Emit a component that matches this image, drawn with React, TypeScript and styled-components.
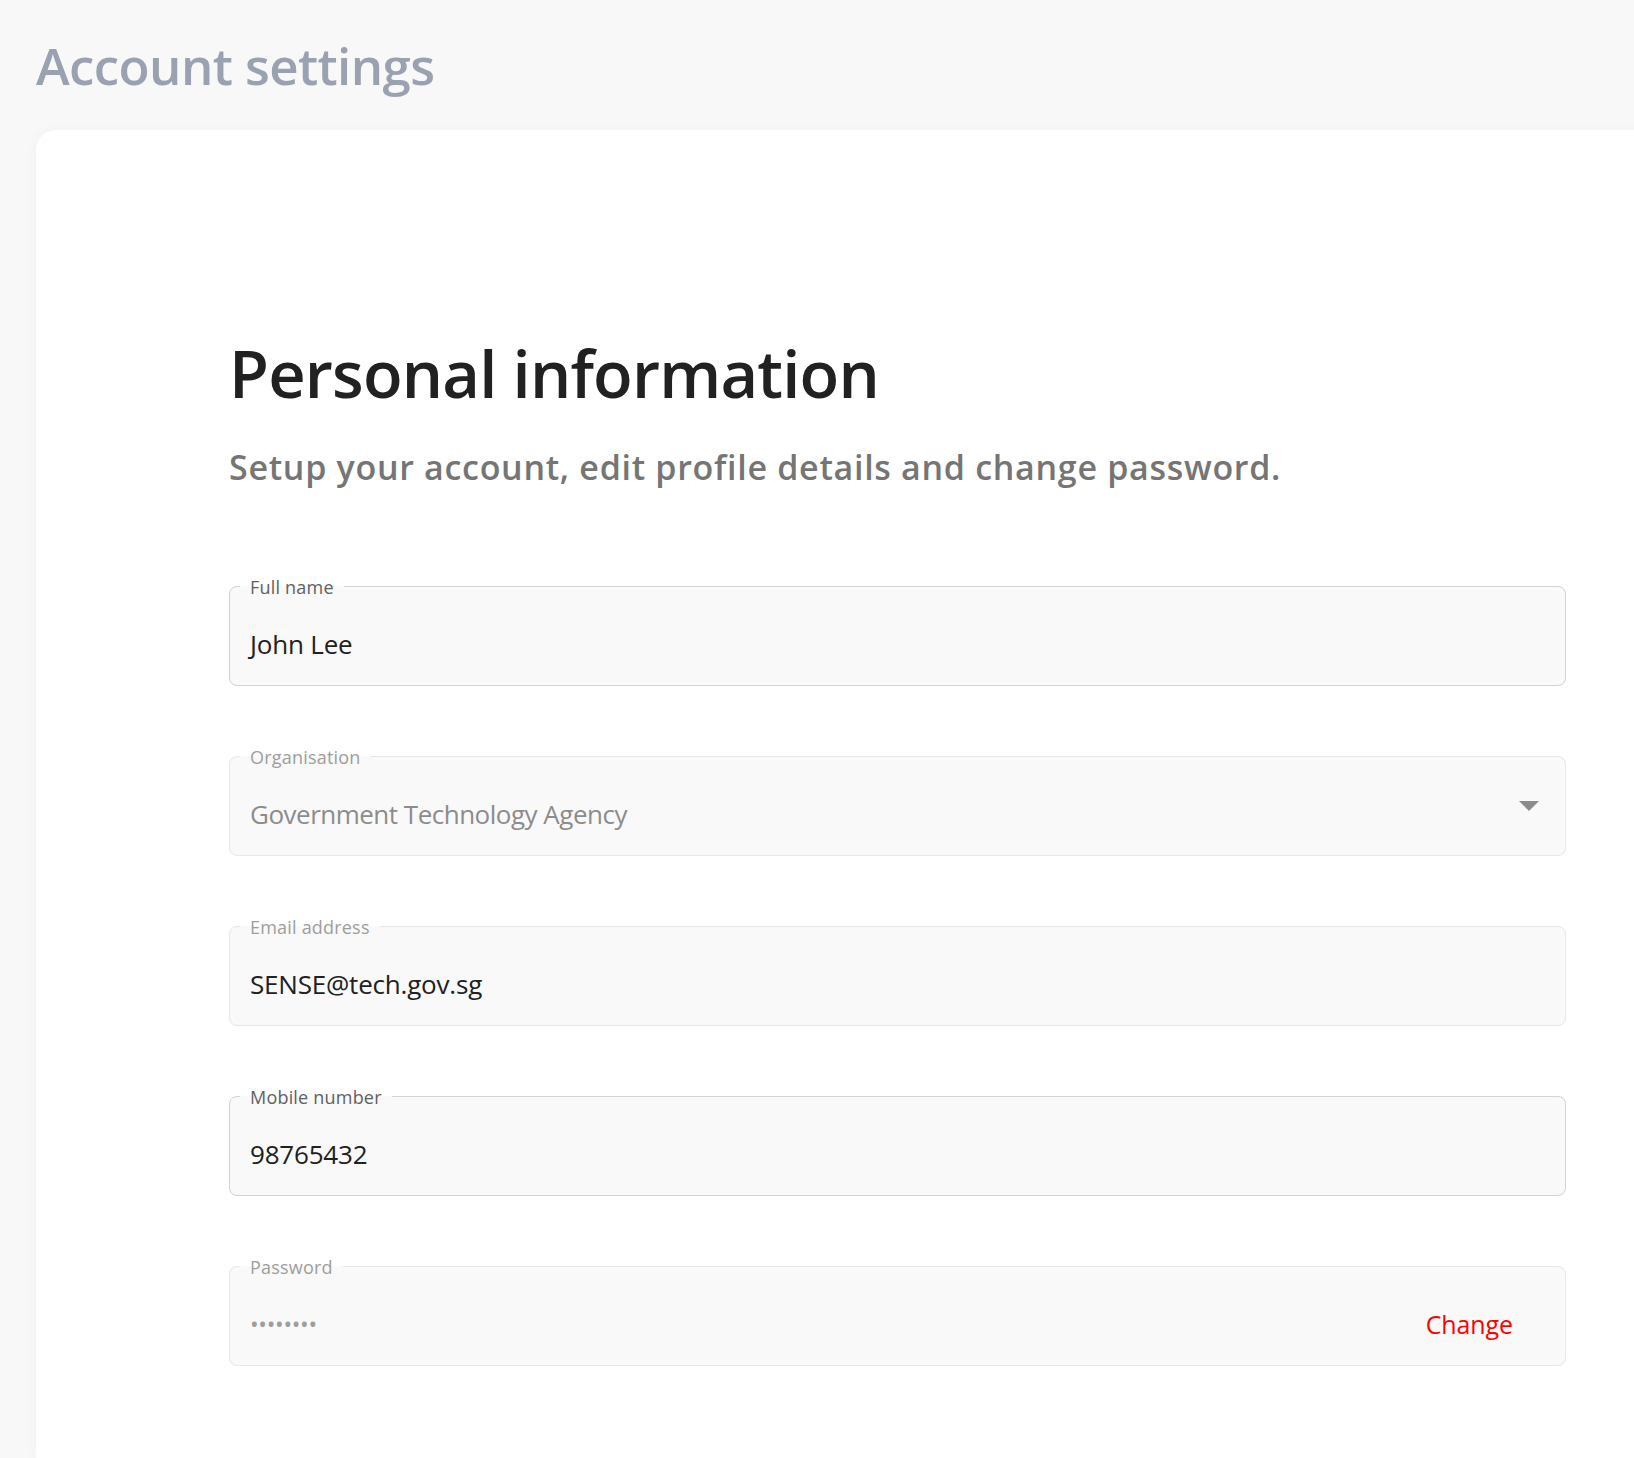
import React from "react";
import styled, { createGlobalStyle } from "styled-components";

const GlobalStyle = createGlobalStyle`
  html, body {
    margin: 0;
    padding: 0;
    background: #f8f8f8;
    font-family: "Open Sans", "Noto Sans", sans-serif;
  }
  * { box-sizing: border-box; }
`;

const Page = styled.div`
  overflow: hidden;
  padding: 0 0 0 36px;
  background: #f8f8f8;
`;

const PageTitle = styled.h1`
  margin: 0;
  padding-top: 33px;
  height: 130px;
  font-size: 51px;
  line-height: 64px;
  font-weight: 600;
  color: #9aa2b1;
  letter-spacing: -0.6px;
`;

const Card = styled.section`
  background: #ffffff;
  border-radius: 20px 0 0 0;
  margin-right: -60px;
  padding: 203px 0 92px 193px;
  box-shadow: 0 0 14px rgba(0, 0, 0, 0.035);
`;

const Heading = styled.h2`
  margin: 0;
  font-size: 65px;
  line-height: 80px;
  font-weight: 600;
  color: #212121;
  letter-spacing: -0.8px;
`;

const Subtitle = styled.p`
  margin: 34px 0 0;
  font-size: 34px;
  line-height: 40px;
  font-weight: 600;
  color: #757575;
  letter-spacing: 0.7px;
`;

const Form = styled.form`
  width: 1337px;
  margin-top: 89px;
  display: flex;
  flex-direction: column;
  gap: 60px;
`;

const Field = styled.fieldset<{ $disabled?: boolean }>`
  margin: 0;
  padding: 0 26px 0 10px;
  min-width: 0;
  border: 1px solid ${(p) => (p.$disabled ? "#e8e8e8" : "#d3d3d3")};
  border-radius: 8px;
  background: #f9f9f9;
`;

const Legend = styled.legend<{ $disabled?: boolean }>`
  padding: 2px 10px 0;
  font-size: 18px;
  line-height: 18px;
  letter-spacing: 0.2px;
  color: ${(p) => (p.$disabled ? "#9e9e9e" : "#616161")};
`;

const Row = styled.div`
  height: 89px;
  padding: 7px 0 0 10px;
  display: flex;
  align-items: center;
  justify-content: space-between;
`;

const Value = styled.span<{ $muted?: boolean }>`
  font-size: 26px;
  line-height: 32px;
  letter-spacing: -0.2px;
  color: ${(p) => (p.$muted ? "#8c8c8c" : "#212121")};
`;

const OrgValue = styled(Value)`
  letter-spacing: -0.5px;
`;

const Dots = styled.span`
  font-size: 23px;
  line-height: 32px;
  letter-spacing: -0.3px;
  color: #9e9e9e;
`;

const Caret = styled.svg`
  width: 20px;
  height: 10px;
  margin-bottom: 16px;
  flex: none;
`;

const ChangeButton = styled.button`
  border: none;
  background: none;
  padding: 0;
  margin-right: 26px;
  font-family: inherit;
  font-size: 25px;
  line-height: 32px;
  letter-spacing: -0.1px;
  color: #ff0000;
  cursor: pointer;
`;

export default function App() {
  return (
    <>
      <GlobalStyle />
      <Page>
        <PageTitle>Account settings</PageTitle>
        <Card>
          <Heading>Personal information</Heading>
          <Subtitle>Setup your account, edit profile details and change password.</Subtitle>
          <Form onSubmit={(e) => e.preventDefault()}>
            <Field>
              <Legend>Full name</Legend>
              <Row>
                <Value>John Lee</Value>
              </Row>
            </Field>
            <Field $disabled>
              <Legend $disabled>Organisation</Legend>
              <Row>
                <OrgValue $muted>Government Technology Agency</OrgValue>
                <Caret viewBox="0 0 20 10">
                  <path d="M0 0 L20 0 L10 10 Z" fill="#8c8c8c" />
                </Caret>
              </Row>
            </Field>
            <Field $disabled>
              <Legend $disabled>Email address</Legend>
              <Row>
                <Value>SENSE@tech.gov.sg</Value>
              </Row>
            </Field>
            <Field>
              <Legend>Mobile number</Legend>
              <Row>
                <Value>98765432</Value>
              </Row>
            </Field>
            <Field $disabled>
              <Legend $disabled>Password</Legend>
              <Row>
                <Dots>••••••••</Dots>
                <ChangeButton type="button">Change</ChangeButton>
              </Row>
            </Field>
          </Form>
        </Card>
      </Page>
    </>
  );
}
